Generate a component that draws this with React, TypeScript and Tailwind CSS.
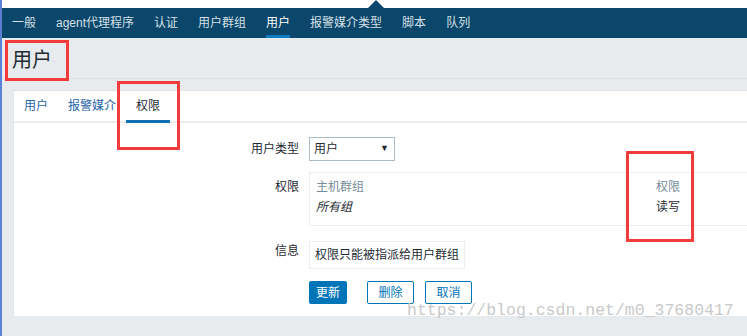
import React from 'react';

const navItems = ['一般', 'agent代理程序', '认证', '用户群组', '用户', '报警媒介类型', '脚本', '队列'];
const tabs = ['用户', '报警媒介', '权限'];

const font = { fontFamily: '"Liberation Sans", "Noto Sans CJK SC", sans-serif' };

const App: React.FC = () => {
  return (
    <div className="relative w-[747px] h-[336px] overflow-hidden bg-[#e8ebee] text-[12px] text-[#1f2c33]" style={font}>
      {/* left blue edge */}
      <div className="absolute left-0 top-0 w-[2px] h-full bg-[#5b80d6] z-10" />

      {/* top white strip */}
      <div className="relative h-2 bg-white">
        <svg className="absolute left-[368px] top-0" width="16" height="8" viewBox="0 0 16 8">
          <path d="M0 8 L8 0 L16 8 Z" fill="#0b466b" />
        </svg>
      </div>

      {/* nav */}
      <nav className="flex h-[30px] bg-[#0b466b] pl-3 gap-5">
        {navItems.map((item) => (
          <div
            key={item}
            className={
              'flex items-center h-full border-b-[3px] pt-[3px] ' +
              (item === '用户' ? 'border-[#0f7dc2] text-white' : 'border-transparent text-[#d5e0e7]')
            }
          >
            {item}
          </div>
        ))}
      </nav>

      {/* header */}
      <div className="flex items-center h-[41px] border-b border-[#dcdfe2] pl-3">
        <h1 className="text-[20px] font-normal leading-none text-[#1f2c33] pt-[4px]">用户</h1>
      </div>

      {/* panel */}
      <div className="ml-[13px] mt-[11px] bg-white h-[226px] border-l border-t border-[#e2e5e8]">
        <div className="flex h-[32px] border-b-2 border-[#ebeef0]">
          {tabs.map((t) => (
            <div
              key={t}
              className={
                'flex items-center px-[10px] border-b-[3px] -mb-[2px] ' +
                (t === '权限' ? 'border-[#0f6fb4] text-[#1f2c33]' : 'border-transparent text-[#1f65a6]')
              }
            >
              {t}
            </div>
          ))}
        </div>

        <div className="flex flex-col pt-[14px]">
          <div className="flex items-center">
            <div className="w-[295px] pr-[10px] text-right">用户类型</div>
            <div className="flex items-center justify-between w-[86px] h-[24px] border border-[#acbbc3] px-[4px]">
              <span>用户</span>
              <span className="text-[9px] text-[#1f2c33] pr-[1px]">▼</span>
            </div>
          </div>

          <div className="flex mt-[11px]">
            <div className="w-[295px] pr-[10px] text-right pt-[6px]">权限</div>
            <div className="flex-1 h-[54px] border-y border-l border-[#ebeef0] pl-[6px] pt-[5px] pr-[67px]">
              <div className="flex justify-between text-[#768d99]">
                <span>主机群组</span>
                <span>权限</span>
              </div>
              <div className="flex justify-between mt-[2px]">
                <span className="italic">所有组</span>
                <span>读写</span>
              </div>
            </div>
          </div>

          <div className="flex mt-[15px]">
            <div className="w-[295px] pr-[10px] text-right pt-[1px]">信息</div>
            <div className="flex items-center h-[28px] border border-[#ebeef0] px-[5px]">权限只能被指派给用户群组</div>
          </div>

          <div className="flex mt-[12px] ml-[295px] gap-[11px]">
            <button className="h-[23px] w-[38px] rounded-[2px] bg-[#0275b8] text-white">更新</button>
            <button className="h-[23px] w-[47px] ml-[9px] rounded-[2px] border border-[#0275b8] text-[#0275b8]">删除</button>
            <button className="h-[23px] w-[47px] rounded-[2px] border border-[#0275b8] text-[#0275b8]">取消</button>
          </div>
        </div>
      </div>

      {/* red annotation boxes */}
      <div className="absolute left-[5px] top-[40px] w-[64px] h-[41px] border-[3px] border-[#f23b3b]" />
      <div className="absolute left-[117px] top-[81px] w-[63px] h-[69px] border-[3px] border-[#f23b3b]" />
      <div className="absolute left-[626px] top-[151px] w-[68px] h-[91px] border-[3px] border-[#f23b3b]" />

      {/* watermark */}
      <div
        className="absolute left-[407px] top-[303px] text-[16.5px] leading-none text-[#c9c9c9]"
        style={{ fontFamily: '"Liberation Mono", monospace' }}
      >
        https://blog.csdn.net/m0_37680417
      </div>
    </div>
  );
};

export default App;
